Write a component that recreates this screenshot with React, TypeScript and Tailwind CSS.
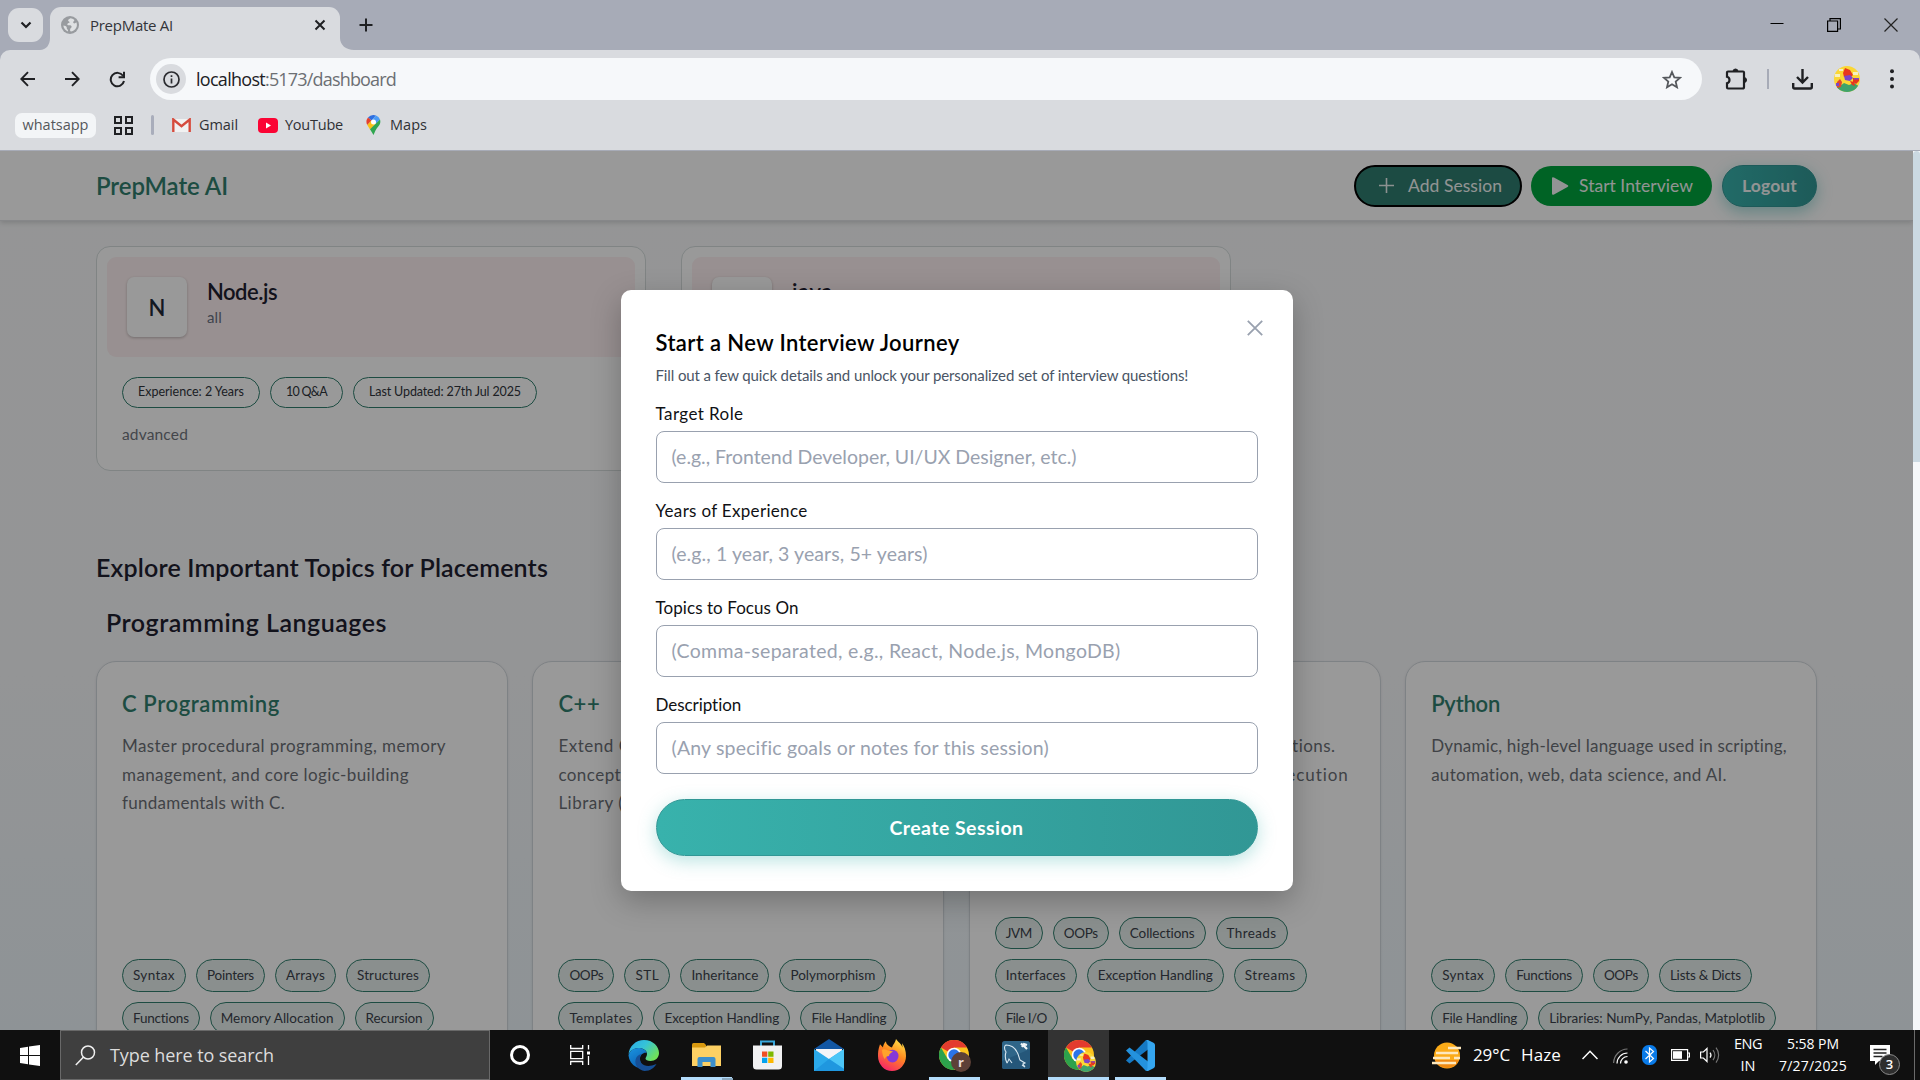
import { useLayoutEffect, useRef, useState } from "react";
import type { ReactNode } from "react";

/** A single line of text whose letter spacing is tuned so the line is `w` pixels wide. */
function Fit({ w, className = "", children }: { w: number; className?: string; children: string }) {
  const ref = useRef<HTMLSpanElement>(null);
  const [spacing, setSpacing] = useState(0);
  useLayoutEffect(() => {
    const el = ref.current;
    if (!el) return;
    el.style.letterSpacing = "0px";
    const next = (w - el.getBoundingClientRect().width) / children.length;
    el.style.letterSpacing = `${next}px`;
    setSpacing(next);
  }, [w, children]);
  return (
    <span ref={ref} className={`inline-block whitespace-nowrap ${className}`} style={{ letterSpacing: `${spacing}px` }}>
      {children}
    </span>
  );
}

/* ---------------------------------- Browser ---------------------------------- */

function TabStrip() {
  return (
    <div className="flex h-[50px] items-end bg-[#a7abb7]">
      <div className="mb-2 ml-2 flex h-[34px] w-[35px] shrink-0 items-center justify-center rounded-[11px] bg-[#d9dbdf]">
        <svg width="12" height="8" viewBox="0 0 12 8" fill="none" stroke="#1f2023" strokeWidth="2.2">
          <path d="M1.5 1.5 6 6l4.500-4.500" />
        </svg>
      </div>
      <svg className="-ml-[3px] shrink-0" width="10" height="12" viewBox="0 0 10 12">
        <path d="M10 0v12H0C6 12 10 7 10 0z" fill="#d9dbdf" />
      </svg>
      <div className="flex h-[43px] w-[290px] shrink-0 items-center rounded-t-[11px] bg-[#d9dbdf] pb-[7px] pl-[11px]">
        <svg width="18" height="18" viewBox="0 0 18 18">
          <circle cx="9" cy="9" r="9" fill="#989b9f" />
          <path
            d="M9.500 2.200c-1 .8-2.400 1-2.400 2.200 0 1 1.500.8 1.500 1.900 0 1-1.700.7-2.200 1.600-.4.800.4 1.400 1.600 1.400 1.500 0 2.600.3 2.600 1.500 0 1.100-1.300 1.400-1.500 2.600-.2.900.2 1.600.9 2 3.300-.4 5.900-3.100 5.900-6.400 0-1-.2-1.900-.6-2.700-.6.8-1.600 1.300-2.500 1-.9-.4-.7-1.400-.1-2 .5-.5.800-1 .5-1.600A6.800 6.800 0 0 0 9.500 2.200zM2.300 9.600c.3 2.900 2.300 5 4.700 5.900.3-1.100-.3-1.700-.9-2.400-.6-.8.100-2-.9-2.700-.8-.6-1.900-.3-2.900-.8z"
            fill="#dfe1e3"
          />
        </svg>
        <Fit w={83} className="ml-[11px] text-[15px] text-[#33343a]">PrepMate AI</Fit>
        <svg className="ml-auto mr-[14px]" width="12" height="12" viewBox="0 0 12 12" stroke="#1f2023" strokeWidth="2">
          <path d="M1.500 1.500l9 9M10.500 1.500l-9 9" />
        </svg>
      </div>
      <svg className="shrink-0" width="14" height="12" viewBox="0 0 14 12">
        <path d="M0 0v12h14C6 12 0 7 0 0z" fill="#d9dbdf" />
      </svg>
      <svg className="mb-[18px] ml-[5px]" width="14" height="14" viewBox="0 0 14 14" stroke="#1f2023" strokeWidth="2">
        <path d="M7 .5v13M.5 7h13" />
      </svg>
      <div className="mb-[18px] ml-auto mr-[22px] flex items-center gap-[43px]">
        <svg width="14" height="14" viewBox="0 0 14 14" stroke="#000">
          <path d="M.5 5.500h13" />
        </svg>
        <svg width="14" height="14" viewBox="0 0 14 14" fill="none" stroke="#000" strokeWidth="1.200">
          <path d="M.6 3h10v10.400H.6zM3 3V.6h10.400V11h-2.800" />
        </svg>
        <svg width="14" height="14" viewBox="0 0 14 14" fill="none" stroke="#222" strokeWidth="1.200">
          <path d="M.5 .5l13 13M13.500 .5l-13 13" />
        </svg>
      </div>
    </div>
  );
}

function AvatarPicture({ size }: { size: number }) {
  return (
    <svg width={size} height={size} viewBox="0 0 26 26">
      <defs>
        <clipPath id={`avatar-${size}`}>
          <circle cx="13" cy="13" r="13" />
        </clipPath>
      </defs>
      <g clipPath={`url(#avatar-${size})`}>
        <path fill="#fbd735" d="M0 0h26v26H0z" />
        <path fill="#f7f0c0" d="M1 8h5v3H1zM19 6h5v3h-5zM5 3h4v2H5z" />
        <path fill="#3fa36b" d="M0 26V21l6-1 4-3 5 2 5-2 6 4v5z" />
        <path fill="#e8371e" d="M11 2l5 2 3 5-2 2-7 0-1-4zM19 12h6v3l-3 3-3-2z" />
        <path fill="#7b46c8" d="M10 10l6-1 3 3-3 3-5-1z" />
        <path fill="#e0472e" d="M3 16l3-3 2 3-1 5-4 1z" />
        <path fill="#7b46c8" d="M2 17h3v3H2zM20 12h5v1.500h-5z" />
        <path fill="#e8371e" d="M16 15l4 1 1 4-3-1z" />
      </g>
    </svg>
  );
}

function Toolbar() {
  return (
    <div className="bg-[#a7abb7]">
      <div className="flex h-[58px] items-center rounded-t-[10px] bg-[#d9dbdf]">
        <svg className="ml-[20px]" width="16" height="16" viewBox="0 0 16 16" fill="none" stroke="#1f2023" strokeWidth="1.900">
          <path d="M15 8H1.500M8 1.200 1.300 8 8 14.800" />
        </svg>
        <svg className="ml-[28px]" width="16" height="16" viewBox="0 0 16 16" fill="none" stroke="#1f2023" strokeWidth="1.900">
          <path d="M1 8h13.500M8 1.200 14.700 8 8 14.800" />
        </svg>
        <svg className="ml-[29px]" width="17" height="17" viewBox="0 0 17 17" fill="none" stroke="#1f2023" strokeWidth="2">
          <path d="M14 4.800A6.700 6.700 0 1 0 15 10M15 .8v5.400H9.600" />
        </svg>
        <div className="ml-[24px] flex h-[42px] w-[1552px] items-center rounded-full bg-[#f6f8fa] pl-[6px]">
          <div className="flex h-[30px] w-[30px] items-center justify-center rounded-full bg-[#d9dbdf]">
            <svg width="17" height="17" viewBox="0 0 17 17" fill="none" stroke="#2a2b2f" strokeWidth="1.700">
              <circle cx="8.500" cy="8.500" r="7.500" />
              <path d="M8.500 7.500v5M8.500 4.300V6" />
            </svg>
          </div>
          <div className="ml-[10px] text-[18px] text-[#6c6f73]">
            <Fit w={69} className="text-[#202124]">localhost</Fit>
            <Fit w={131}>:5173/dashboard</Fit>
          </div>
          <svg className="ml-auto mr-[20px]" width="20" height="19" viewBox="0 0 20 19" fill="none" stroke="#55585c" strokeWidth="1.800">
            <path d="M10 2l2.300 5.300 5.700.5-4.300 3.800 1.300 5.700-5-3-5 3 1.300-5.700L2 7.800l5.700-.5z" />
          </svg>
        </div>
        <svg className="ml-[23px]" width="23" height="24" viewBox="0 0 23 24">
          <path
            d="M3 4.500h15a1 1 0 0 1 1 1V20a1.500 1.500 0 0 1-1.500 1.500H3a1 1 0 0 1-1-1v-4.300a3.300 3.300 0 0 0 0-6.400V5.500a1 1 0 0 1 1-1z"
            fill="none"
            stroke="#1f2023"
            strokeWidth="2.200"
          />
          <path d="M8 4.500a2.500 2.500 0 0 1 5 0zM19 10.500a2.500 2.500 0 0 1 0 5z" fill="#1f2023" stroke="#1f2023" />
        </svg>
        <div className="ml-[19px] h-5 w-[2px] bg-[#a7abb7]" />
        <svg className="ml-[23px]" width="21" height="21" viewBox="0 0 21 21" fill="none" stroke="#1f2023" strokeWidth="2.400">
          <path d="M10.500 0v13M5 8l5.500 5.500L16 8M1.200 14v4a1.500 1.500 0 0 0 1.500 1.500h15.600a1.500 1.500 0 0 0 1.500-1.500v-4" />
        </svg>
        <div className="ml-[21px]">
          <AvatarPicture size={26} />
        </div>
        <svg className="ml-[30px]" width="4" height="20" viewBox="0 0 4 20" fill="#1f2023">
          <circle cx="2" cy="2.300" r="2" />
          <circle cx="2" cy="10" r="2" />
          <circle cx="2" cy="17.500" r="2" />
        </svg>
      </div>
      <div className="flex h-[43px] items-start border-b border-[#a7abb7] bg-[#d9dbdf] pt-[5px] text-[14.500px] text-[#303135]">
        <div className="ml-[15px] flex h-[25px] w-[81px] items-center justify-center rounded-[7px] bg-[#f3f5f7] pb-px text-[#55585c]">
          <Fit w={66}>whatsapp</Fit>
        </div>
        <svg className="ml-[18px] mt-[3px]" width="19" height="19" viewBox="0 0 19 19" fill="none" stroke="#1f2023" strokeWidth="2">
          <path d="M1 1h6v6H1zM12 1h6v6h-6zM1 12h6v6H1zM12 12h6v6h-6z" />
        </svg>
        <div className="ml-[18px] mt-[2px] h-5 w-[3px] rounded bg-[#a9adbb]" />
        <svg className="ml-[18px] mt-[5px]" width="19" height="14" viewBox="0 0 19 14">
          <path d="M0 1h19v13H0z" fill="#f1f1f1" />
          <path d="M1.300 14V1.500l8.200 6.700 8.200-6.700V14" fill="none" stroke="#d54b3d" strokeWidth="2.400" />
        </svg>
        <Fit w={39} className="ml-[8px] mt-px">Gmail</Fit>
        <svg className="ml-[20px] mt-[5px]" width="20" height="15" viewBox="0 0 20 15">
          <rect width="20" height="15" rx="4" fill="#fb0434" />
          <path d="M8 4.500v6l5-3z" fill="#fff" />
        </svg>
        <Fit w={58} className="ml-[7px] mt-px">YouTube</Fit>
        <svg className="ml-[23px] mt-[2px]" width="15" height="20" viewBox="0 0 15 20">
          <path d="M7.500 0A7 7 0 0 0 2 2.500l3.500 3L10 .6A7 7 0 0 0 7.500 0z" fill="#2f6fe0" />
          <path d="M2 2.500A7 7 0 0 0 1.300 10L5.500 5.500z" fill="#e5412f" />
          <path d="M10 .6a7 7 0 0 1 4 4L9.500 9 5.500 5.500z" fill="#4b9bf5" />
          <path d="M1.300 10 5.500 5.500 10 8.500 4 14.500z" fill="#fbc116" />
          <path d="M14 4.600c1.600 5-2.800 7-4.500 11L7.500 20 4 14.200z" fill="#31a650" />
          <circle cx="7.500" cy="7" r="2.500" fill="#fff" />
        </svg>
        <Fit w={37} className="ml-[9px] mt-px">Maps</Fit>
      </div>
    </div>
  );
}

/* ------------------------------------ App page ------------------------------------ */

function PageHeader() {
  return (
    <header className="flex h-[70px] shrink-0 items-center border-b border-[#e0e2e4] bg-white pl-[96px] pr-[96px] shadow-[0_2px_5px_rgba(0,0,0,0.15)]">
      <Fit w={132} className="text-[24px] font-semibold text-[#317f6e]">PrepMate AI</Fit>
      <div className="ml-auto flex items-center gap-[9px] text-[17.500px] text-[#f4f7f7]">
        <div className="flex h-[42px] w-[168px] items-center rounded-full border-2 border-black bg-[#2f7d70] pl-[23px]">
          <svg width="15" height="15" viewBox="0 0 15 15" stroke="#e9f2f0" strokeWidth="1.600">
            <path d="M7.500 0v15M0 7.500h15" />
          </svg>
          <Fit w={94} className="ml-[14px] pt-[2px]">Add Session</Fit>
        </div>
        <div className="mr-px flex h-[40px] w-[181px] items-center rounded-full bg-[#00a63e] pl-[21px]">
          <svg width="17" height="18" viewBox="0 0 17 18" fill="#f4f7f7">
            <path d="M0 1.500Q0-.5 2 .6L15.500 8q1.500 1 0 2L2 17.500Q0 18.500 0 16.500z" />
          </svg>
          <Fit w={114} className="ml-[10px] pt-[2px]">Start Interview</Fit>
        </div>
        <div className="flex h-[42px] w-[95px] items-center justify-center rounded-full border border-[#319795] bg-linear-to-r from-[#38b2ac] to-[#319795] font-bold shadow-[0_5px_15px_rgba(56,178,172,0.45)]">
          <Fit w={55} className="pt-[2px]">Logout</Fit>
        </div>
      </div>
    </header>
  );
}

function SessionCard({ letter, title, titleWidth, topic }: { letter: string; title: string; titleWidth: number; topic: string }) {
  const pills: [string, number][] = [
    ["Experience: 2 Years", 106],
    ["10 Q&A", 41],
    ["Last Updated: 27th Jul 2025", 152],
  ];
  return (
    <div className="h-[225px] w-[550px] rounded-[14px] border border-[#d5dddd] bg-white p-[10px]">
      <div className="flex h-[100px] rounded-[9px] bg-[#fef1f2] pl-[20px] pt-[20px]">
        <div className="flex h-[60px] w-[60px] items-center justify-center rounded-[7px] bg-white text-[22px] font-semibold text-[#1e2939] shadow-[0_1px_3px_rgba(0,0,0,0.25)]">
          {letter}
        </div>
        <div className="ml-[20px] flex flex-col items-start">
          <Fit w={titleWidth} className="text-[22px] leading-[30px] font-semibold text-[#1e2030]">{title}</Fit>
          <Fit w={15} className="text-[15px] leading-[20px] text-[#6a7282]">{topic}</Fit>
        </div>
      </div>
      <div className="ml-[15px] mt-[20px] flex gap-[10px]">
        {pills.map(([label, width]) => (
          <div key={label} className="flex h-[31px] items-center rounded-full border border-[#317f6e] px-[15px] text-[12.500px] text-[#30343c]">
            <Fit w={width}>{label}</Fit>
          </div>
        ))}
      </div>
      <div className="ml-[15px] mt-[15px] text-[15.500px] text-[#71757d]">
        <Fit w={66}>advanced</Fit>
      </div>
    </div>
  );
}

type Topic = { title: string; titleWidth: number; lines: [string, number][]; tags: [string, number][][] };

const topics: Topic[] = [
  {
    title: "C Programming",
    titleWidth: 158,
    lines: [
      ["Master procedural programming, memory", 324],
      ["management, and core logic-building", 287],
      ["fundamentals with C.", 163],
    ],
    tags: [
      [["Syntax", 42], ["Pointers", 47], ["Arrays", 39], ["Structures", 62]],
      [["Functions", 56], ["Memory Allocation", 113], ["Recursion", 57]],
    ],
  },
  {
    title: "C++",
    titleWidth: 42,
    lines: [
      ["Extend C with object-oriented", 240],
      ["concepts and the Standard Template", 285],
      ["Library (STL).", 104],
    ],
    tags: [
      [["OOPs", 34], ["STL", 24], ["Inheritance", 67], ["Polymorphism", 85]],
      [["Templates", 63], ["Exception Handling", 115], ["File Handling", 75]],
    ],
  },
  {
    title: "Java",
    titleWidth: 44,
    lines: [
      ["Robust OOP language for web applications.", 341],
      ["Platform-independent with JVM execution", 354],
    ],
    tags: [
      [["JVM", 26], ["OOPs", 34], ["Collections", 65], ["Threads", 50]],
      [["Interfaces", 60], ["Exception Handling", 115], ["Streams", 51]],
      [["File I/O", 41]],
    ],
  },
  {
    title: "Python",
    titleWidth: 69,
    lines: [
      ["Dynamic, high-level language used in scripting,", 356],
      ["automation, web, data science, and AI.", 296],
    ],
    tags: [
      [["Syntax", 42], ["Functions", 56], ["OOPs", 34], ["Lists & Dicts", 71]],
      [["File Handling", 75], ["Libraries: NumPy, Pandas, Matplotlib", 216]],
    ],
  },
];

function TopicCard({ topic }: { topic: Topic }) {
  return (
    <div className="flex h-[399px] flex-col rounded-[20px] border border-[#d3d9de] bg-white px-[25px] pt-[25px] pb-[25px] shadow-[0_1px_3px_rgba(0,0,0,0.08)]">
      <div className="text-[22px] leading-[34px] font-semibold text-[#317f6e]">
        <Fit w={topic.titleWidth}>{topic.title}</Fit>
      </div>
      <div className="mt-[11px] flex flex-col items-start text-[17px] leading-[28.500px] text-[#6b6f76]">
        {topic.lines.map(([line, width]) => (
          <Fit key={line} w={width}>{line}</Fit>
        ))}
      </div>
      <div className="mt-auto flex flex-col gap-[10px]">
        {topic.tags.map((row, i) => (
          <div key={i} className="flex gap-[10px]">
            {row.map(([tag, width]) => (
              <div key={tag} className="flex h-[32.500px] items-center rounded-full border border-[#317f6e] bg-[#e6efed] px-[10px] text-[13.500px] text-[#3b424c]">
                <Fit w={width}>{tag}</Fit>
              </div>
            ))}
          </div>
        ))}
      </div>
    </div>
  );
}

const fields: { label: string; labelWidth: number; hint: string; hintWidth: number }[] = [
  { label: "Target Role", labelWidth: 88, hint: "(e.g., Frontend Developer, UI/UX Designer, etc.)", hintWidth: 405 },
  { label: "Years of Experience", labelWidth: 152, hint: "(e.g., 1 year, 3 years, 5+ years)", hintWidth: 256 },
  { label: "Topics to Focus On", labelWidth: 143, hint: "(Comma-separated, e.g., React, Node.js, MongoDB)", hintWidth: 449 },
  { label: "Description", labelWidth: 86, hint: "(Any specific goals or notes for this session)", hintWidth: 377 },
];

function SessionModal() {
  return (
    <div className="absolute inset-0 flex items-center justify-center bg-black/40">
      <div className="relative flex h-[601px] w-[672px] flex-col items-start rounded-[10px] bg-white px-[35px] pt-[35px] shadow-[0_10px_30px_rgba(0,0,0,0.25)]">
        <svg className="absolute right-[30px] top-[30px]" width="16" height="16" viewBox="0 0 16 16" stroke="#99a1af" strokeWidth="1.800">
          <path d="M.8 .8l14.400 14.400M15.200 .8L.8 15.200" />
        </svg>
        <Fit w={304} className="pt-px text-[22px] leading-[34px] font-semibold text-black">Start a New Interview Journey</Fit>
        <Fit w={533} className="mt-[4px] text-[15px] leading-[22px] text-[#4a5565]">
          Fill out a few quick details and unlock your personalized set of interview questions!
        </Fit>
        <div className="mt-[15px] flex w-full flex-col gap-[15px]">
          {fields.map((f) => (
            <div key={f.label} className="flex h-[82px] flex-col items-start">
              <Fit w={f.labelWidth} className="h-[30px] text-[17px] leading-[26px] text-[#101114]">{f.label}</Fit>
              <div className="flex h-[52px] w-full items-center rounded-[8px] border border-[#99a1af] px-[15px] text-[19.500px] text-[#99a1af]">
                <Fit w={f.hintWidth}>{f.hint}</Fit>
              </div>
            </div>
          ))}
        </div>
        <div className="mt-[25px] flex h-[57px] w-full items-center justify-center rounded-full border border-[#319795] bg-linear-to-r from-[#38b2ac] to-[#319795] text-[19.500px] font-bold text-white shadow-[0_5px_18px_rgba(56,178,172,0.35)]">
          <Fit w={134}>Create Session</Fit>
        </div>
      </div>
    </div>
  );
}

function WebPage() {
  return (
    <div className="flex h-[879px]">
      <div className="relative flex w-[1913px] flex-col overflow-hidden bg-linear-to-b from-[#f8f9fa] via-[#f7f8fa] via-60% to-[#edf6fb] font-['Lato',sans-serif]">
        <PageHeader />
        <main className="flex flex-col px-[96px]">
          <div className="mt-[25px] flex gap-[35px]">
            <SessionCard letter="N" title="Node.js" titleWidth={70} topic="all" />
            <SessionCard letter="J" title="java" titleWidth={41} topic="all" />
          </div>
          <h2 className="mt-[78px] text-[25px] leading-[36px] font-semibold text-[#1e2030]">
            <Fit w={452}>Explore Important Topics for Placements</Fit>
          </h2>
          <h3 className="mt-[19px] pl-[10px] text-[25px] leading-[36px] font-semibold text-[#1e2030]">
            <Fit w={281}>Programming Languages</Fit>
          </h3>
          <div className="mt-[21px] grid grid-cols-4 gap-[24.500px]">
            {topics.map((t) => (
              <TopicCard key={t.title} topic={t} />
            ))}
          </div>
        </main>
        <SessionModal />
      </div>
      <div className="w-[7px] bg-[#f5f7f9]">
        <div className="h-[311px] rounded-t-[4px] bg-[#cbd9e2]" />
      </div>
    </div>
  );
}

/* ------------------------------------ Taskbar ------------------------------------ */

function ChromeIcon({ children }: { children: ReactNode }) {
  return (
    <div className="relative">
      <svg width="30" height="30" viewBox="0 0 30 30">
        <circle cx="15" cy="15" r="15" fill="#fcc31e" />
        <path d="M15 15 2 7.500A15 15 0 0 1 28 7.500H15z" fill="#e33b2e" />
        <path d="M2 7.500A15 15 0 0 0 15 30l6.500-11.300L15 15 8.500 18.700z" fill="#2da24c" />
        <circle cx="15" cy="15" r="7.300" fill="#fff" />
        <circle cx="15" cy="15" r="5.700" fill="#2b74e8" />
      </svg>
      {children}
    </div>
  );
}

function TaskIcon({ children, width = "w-[62px]", mark = "", active = false }: { children: ReactNode; width?: string; mark?: string; active?: boolean }) {
  return (
    <div className={`relative flex h-full shrink-0 items-center justify-center ${width}`}>
      {active && <div className="absolute inset-y-0 left-0 w-[61px] bg-[#333333]" />}
      <div className="relative">{children}</div>
      {mark && <div className={`absolute bottom-0 h-[3px] bg-[#b3dcfb] ${mark}`} />}
    </div>
  );
}

function Taskbar() {
  return (
    <div className="flex h-[50px] items-center bg-[#101010] font-['Open_Sans',sans-serif] text-white">
      <svg className="ml-[20px] mr-[20px] shrink-0" width="20" height="21" viewBox="0 0 20 21" fill="#fff">
        <path d="M0 3l8-1.200V10H0zM9 1.600 20 0v10H9zM0 11h8v8.200L0 18zM9 11h11v10L9 19.400z" />
      </svg>
      <div className="flex h-[50px] w-[430px] shrink-0 items-center border border-[#696969] bg-[#3f3f3f] pl-[14px]">
        <svg width="21" height="21" viewBox="0 0 21 21" fill="none" stroke="#f0f0f0" strokeWidth="1.500">
          <circle cx="13" cy="7.500" r="6.500" />
          <path d="M8.300 12.300.8 20" />
        </svg>
        <Fit w={164} className="ml-[14px] text-[18px] text-[#dcdcdc]">Type here to search</Fit>
      </div>
      <TaskIcon width="w-[60px]">
        <div className="h-[20px] w-[20px] rounded-full border-[3px] border-white" />
      </TaskIcon>
      <TaskIcon width="w-[60px]">
        <svg width="20" height="20" viewBox="0 0 20 20" fill="none" stroke="#fff" strokeWidth="1.300">
          <path d="M.7 0v3.500h12V0M.7 20v-3.500h12V20M.7 6.300h12v7.400H.7zM18.500 0v4.500M18.500 11v9" />
          <path d="M17 6.500h3v3h-3z" fill="#fff" stroke="none" />
        </svg>
      </TaskIcon>
      <TaskIcon width="w-[66px]">
        <svg width="31" height="31" viewBox="0 0 31 31">
          <defs>
            <linearGradient id="edgeTop" x1="0" y1="0" x2="1" y2=".6">
              <stop offset="0" stopColor="#2aa8e8" />
              <stop offset=".5" stopColor="#35c3d8" />
              <stop offset="1" stopColor="#6fe05a" />
            </linearGradient>
            <linearGradient id="edgeSide" x1="0" y1="0" x2=".6" y2="1">
              <stop offset="0" stopColor="#1a94e0" />
              <stop offset="1" stopColor="#0b5cb0" />
            </linearGradient>
          </defs>
          <path d="M.5 15C1 6 8 0 16 0c9 0 15 6.500 15 13 0 5-4 8-8.500 8-3 0-5-1-5-2.500 0-1 1.500-2 1.500-4.500 0-3.500-4-6-8-6C6 8 1.500 11 .5 15z" fill="url(#edgeTop)" />
          <path d="M.5 15.500C1.500 11 5.500 8 10.500 8c4 0 7.500 2 8.300 5-3-.8-6.800 1.500-6.800 6 0 5.500 5 9.500 10 8.500a15 15 0 0 1-21.500-12z" fill="url(#edgeSide)" />
          <path d="M12 17.500c-1 7 6 11 16.500 6.500-2 3.500-6 7-12 7-6-1-10-6-9-11 .5-3 3-5.500 6-6-1 1-1.500 2-1.500 3.500z" fill="#164f96" />
        </svg>
      </TaskIcon>
      <TaskIcon width="w-[60px]" mark="left-[5px] w-[51px]">
        <svg width="29" height="25" viewBox="0 0 29 25">
          <path d="M0 1.500Q0 0 1.500 0H12l2 2v4H0z" fill="#d9990f" />
          <path d="M0 4.500h13l2-2h14V23H0z" fill="#fdd063" />
          <path d="M5.500 24v-8a2 2 0 0 1 2-2h14a2 2 0 0 1 2 2v8h-5v-5h-8v5z" fill="#3d8fcb" />
        </svg>
        <div className="absolute -bottom-[13px] left-[30px] z-10 h-[3px] w-[11px] bg-[#8aa9c0]" />
      </TaskIcon>
      <TaskIcon width="w-[62px]">
        <svg width="29" height="30" viewBox="0 0 29 30">
          <path d="M8 6V1.500h13V6" fill="none" stroke="#38a8dc" strokeWidth="2" />
          <path d="M0 5.500h29V26a3.500 3.500 0 0 1-3.500 3.500h-22A3.500 3.500 0 0 1 0 26z" fill="#f1f1f2" />
          <path d="M9 11.500h5.300v5.300H9z" fill="#f05024" />
          <path d="M15.200 11.500h5.300v5.300h-5.300z" fill="#7eb900" />
          <path d="M9 17.700h5.300V23H9z" fill="#04a3ee" />
          <path d="M15.200 17.700h5.300V23h-5.300z" fill="#fdb800" />
        </svg>
      </TaskIcon>
      <TaskIcon width="w-[62px]">
        <svg width="30" height="32" viewBox="0 0 30 32">
          <path d="M0 10 15 0l15 10z" fill="#1257a4" />
          <path d="M2 10h26v10H2z" fill="#f4f4f8" />
          <path d="M0 10l15 10 15-10v22H0z" fill="#2ba9ea" />
          <path d="M30 10v20L15 20z" fill="#4cc6f7" />
          <path d="M0 32 15 20l15 10v2z" fill="#1f97df" />
        </svg>
      </TaskIcon>
      <TaskIcon width="w-[64px]">
        <svg width="28" height="32" viewBox="0 0 28 30" preserveAspectRatio="none">
          <defs>
            <linearGradient id="fox" x1=".8" y1="0" x2=".3" y2="1">
              <stop offset="0" stopColor="#ffe54a" />
              <stop offset=".45" stopColor="#ff8a1f" />
              <stop offset="1" stopColor="#f7236a" />
            </linearGradient>
          </defs>
          <path d="M18 0c-1 4-3 5-4 8-4-2-6-3-6-6C6 4 5 6 5 8L2 5C0 10 0 13 0 16a14 14 0 0 0 28 0c0-5-1.500-9-4-12l.5 4C23 4 20 3 18 0z" fill="url(#fox)" />
          <circle cx="14.500" cy="16" r="6" fill="#8638d8" />
          <path d="M4 10c3-1 5 0 6 1 2 0 4 0 5 1-2 1-4 2-4 4-2 0-4 1-4 3-2-2-3-6-3-9z" fill="#ffa32b" />
        </svg>
      </TaskIcon>
      <TaskIcon width="w-[60px]" mark="left-[5px] w-[51px]">
        <ChromeIcon>
          <div className="absolute -bottom-[2px] -right-[2px] flex h-[20px] w-[20px] items-center justify-center rounded-full bg-[#5d4037] text-[13px] leading-none font-bold text-[#e8dcd8]">
            r
          </div>
        </ChromeIcon>
      </TaskIcon>
      <TaskIcon width="w-[64px]">
        <svg width="28" height="28" viewBox="0 0 28 28">
          <rect width="28" height="28" rx="2.500" fill="#2f6588" />
          <path d="M0 20 28 8v17.500A2.500 2.500 0 0 1 25.500 28h-23A2.500 2.500 0 0 1 0 25.500z" fill="#25577a" />
          <path d="M5 22c-2-4-2-8-1-11C2 8 2 5 4 4c5 0 9 3 11 7 2 3 2 6 3 8l5 3-2 1 2 3-3-2M5 22c1-1 1-2 2-4l3 4" fill="none" stroke="#d7e6ef" strokeWidth="1.100" />
          <path d="M19 2.500l2.500 2.500M21 4l4 4M20 6l2-3 3 1" fill="none" stroke="#f0f5f8" strokeWidth="2.200" />
        </svg>
      </TaskIcon>
      <TaskIcon width="w-[61px]" active mark="left-0 w-[61px]">
        <ChromeIcon>
          <div className="absolute -bottom-[2px] -right-[2px]">
            <AvatarPicture size={20} />
          </div>
        </ChromeIcon>
      </TaskIcon>
      <TaskIcon width="w-[63px]" mark="left-[6px] w-[51px]">
        <svg width="29" height="31" viewBox="0 0 29 31">
          <path d="M20 0l2 1v8.500L3.500 23.500 0 20.500z" fill="#1579c4" />
          <path d="M20 31l2-1v-8.500L3.500 7.500 0 10.500z" fill="#2492dd" />
          <path d="M20 0q1-.3 2 .1l5.500 2.600q1.500.8 1.500 2.300v21q0 1.500-1.500 2.300L22 30.900q-1 .4-2 .1 1.500-1 1.500-3V3q0-2-1.500-3z" fill="#35a6f0" />
        </svg>
      </TaskIcon>
      <div className="ml-auto flex h-full items-center">
        <svg width="30" height="27" viewBox="0 0 30 27">
          <circle cx="15" cy="13.500" r="13" fill="#fbab18" />
          <path d="M3 18a13 13 0 0 0 24 0z" fill="#f08a12" />
          <path d="M16 6h13M4 11h22M1 16h17M22 16h6M0 21h24" stroke="#fde8bd" strokeWidth="2.600" />
        </svg>
        <Fit w={37} className="ml-[11px] text-[17px]">29°C</Fit>
        <Fit w={40} className="ml-[11px] text-[17px]">Haze</Fit>
        <svg className="ml-[21px]" width="16" height="10" viewBox="0 0 16 10" fill="none" stroke="#fff" strokeWidth="1.500">
          <path d="M.5 9 8 1.300 15.500 9" />
        </svg>
        <svg className="ml-[15px] mt-[2px]" width="15" height="16" viewBox="0 0 15 16" fill="none" stroke="#fff" strokeWidth="1.200">
          <path d="M.6 15A14.400 14.400 0 0 1 14.500 1" stroke="#777" />
          <path d="M4 15.500A10.500 10.500 0 0 1 14.500 5M7.500 15.500a7 7 0 0 1 7-7" />
          <circle cx="13" cy="14" r="1.800" fill="#fff" stroke="none" />
        </svg>
        <svg className="ml-[14px]" width="15" height="20" viewBox="0 0 15 20">
          <rect width="15" height="20" rx="6.500" fill="#0a7be8" />
          <path d="M3.500 6l8 7.500-4 3.500V3l4 3.500L3.500 14" fill="none" stroke="#fff" strokeWidth="1.200" />
        </svg>
        <svg className="ml-[14px]" width="19" height="12" viewBox="0 0 19 12">
          <path d="M.6.6h16v10.800H.6zM17 4h1.500v4H17" fill="none" stroke="#fff" strokeWidth="1.200" />
          <path d="M2 2.200h9v7.600H2z" fill="#fff" />
        </svg>
        <svg className="ml-[10px]" width="20" height="18" viewBox="0 0 20 18" fill="none" stroke="#fff" strokeWidth="1.200">
          <path d="M.6 6h2.800L7 2.500v13L3.400 12H.6z" />
          <path d="M10 6.500a4 4 0 0 1 0 5" />
          <path d="M13 4a8 8 0 0 1 0 10M16 1.500a12 12 0 0 1 0 15" stroke="#777" />
        </svg>
        <div className="ml-[9px] flex w-[38px] flex-col items-center text-[14.500px] leading-[22px]">
          <Fit w={28}>ENG</Fit>
          <Fit w={15}>IN</Fit>
        </div>
        <div className="ml-[10px] flex w-[72px] flex-col items-center text-[14px] leading-[22px]">
          <Fit w={52}>5:58 PM</Fit>
          <Fit w={68}>7/27/2025</Fit>
        </div>
        <div className="relative ml-[21px] h-[20px] w-[20px]">
          <svg width="20" height="20" viewBox="0 0 20 20">
            <path d="M0 0h20v16H9l-4 4v-4H0z" fill="#fff" />
            <path d="M3.500 4.500h13M3.500 8h13M3.500 11.500h9" stroke="#222" strokeWidth="1.300" />
          </svg>
          <div className="absolute left-[9px] top-[9px] flex h-[21px] w-[21px] items-center justify-center rounded-full border border-[#8a8a8a] bg-[#2e2e2e] text-[13px] leading-none font-semibold">
            3
          </div>
        </div>
        <div className="ml-[24px] mr-[5px] h-full w-px bg-[#6a6a6a]" />
      </div>
    </div>
  );
}

export default function App() {
  return (
    <div className="h-[1080px] w-[1920px] overflow-hidden font-['Open_Sans',sans-serif]">
      <TabStrip />
      <Toolbar />
      <WebPage />
      <Taskbar />
    </div>
  );
}
